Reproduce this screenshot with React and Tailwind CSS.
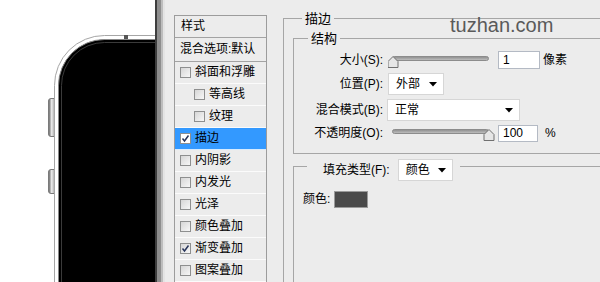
import React from 'react';

const effects = [
  { label: '斜面和浮雕' },
  { label: '等高线', indent: true },
  { label: '纹理', indent: true },
  { label: '描边', checked: true, active: true },
  { label: '内阴影' },
  { label: '内发光' },
  { label: '光泽' },
  { label: '颜色叠加' },
  { label: '渐变叠加', checked: true },
  { label: '图案叠加' },
];

const Phone = () => (
  <svg width="155" height="282" viewBox="0 0 155 282">
    <defs>
      <linearGradient id="btn" x1="0" x2="1" y1="0" y2="0">
        <stop offset="0" stopColor="#555" />
        <stop offset="0.35" stopColor="#ededed" />
        <stop offset="0.7" stopColor="#a0a0a0" />
        <stop offset="1" stopColor="#4c4c4c" />
      </linearGradient>
    </defs>
    <rect x="48.5" y="98.5" width="9" height="38" rx="2.5" fill="url(#btn)" stroke="#7a7a7a" />
    <rect x="48.5" y="169.5" width="9" height="24" rx="2.5" fill="url(#btn)" stroke="#7a7a7a" />
    <rect x="54.5" y="35.5" width="260" height="400" rx="50" fill="#fff" stroke="#a6a6a6" />
    <rect x="58.5" y="39.5" width="252" height="400" rx="46" fill="#000" stroke="#8a8a8a" />
    <rect x="61.5" y="42.5" width="246" height="400" rx="43" fill="none" stroke="#3a3a3a" />
    <rect x="124" y="35" width="4" height="4" fill="#555" />
  </svg>
);

const Check = ({ on, white }) => (
  <span
    className={`flex h-[11px] w-[11px] shrink-0 items-center justify-center border border-[#8e8f8f] ${
      white ? 'bg-white' : 'bg-[linear-gradient(135deg,#d6d6d6,#f7f7f7)]'
    }`}
  >
    {on && (
      <svg width="9" height="9" viewBox="0 0 9 9">
        <path d="M1.5 4.5 L3.5 7 L7.5 1.5" fill="none" stroke="#27345a" strokeWidth="1.5" />
      </svg>
    )}
  </span>
);

const Arrow = () => (
  <svg width="8" height="5" viewBox="0 0 8 5" className="shrink-0">
    <path d="M0 0 H8 L4 4.5 Z" fill="#000" />
  </svg>
);

const Dropdown = ({ label, className }) => (
  <div
    className={`flex h-[22px] items-center justify-between border border-[#d6d6d6] bg-white pl-[7px] pr-[6px] leading-[20px] ${className}`}
  >
    <span>{label}</span>
    <Arrow />
  </div>
);

const Slider = ({ at }) => (
  <svg width="110" height="22" viewBox="0 0 110 22" className="shrink-0">
    <defs>
      <linearGradient id="track" x1="0" x2="0" y1="0" y2="1">
        <stop offset="0" stopColor="#8a8a8a" />
        <stop offset="1" stopColor="#c4c4c4" />
      </linearGradient>
    </defs>
    <rect x="4.5" y="7.5" width="96" height="4" rx="2" fill="url(#track)" stroke="#8c8c8c" />
    <path
      d={`M${at - 5} 18.5 V12.5 L${at} 7.5 L${at + 5} 12.5 V18.5 Z`}
      fill="#e6e6e6"
      stroke="#707070"
    />
  </svg>
);

const Label = ({ children }) => (
  <span className="w-[89px] shrink-0 text-right leading-[22px]">{children}</span>
);

export default function App() {
  return (
    <div className="relative flex h-[282px] w-[600px] overflow-hidden bg-white font-['Liberation_Sans','Noto_Sans_CJK_SC',sans-serif] text-[12px] text-black">
      <div className="w-[155px] shrink-0">
        <Phone />
      </div>

      <div className="flex flex-1 bg-[#ececec]">
        {/* window edge */}
        <div className="w-[10px] shrink-0 bg-[linear-gradient(to_right,#3e3e3e_0px,#3e3e3e_2px,#8e8e8e_2px,#8e8e8e_6px,#bdbdbd_6px,#bdbdbd_8px,#e4e4e4_8px)]" />

        {/* styles list */}
        <div className="ml-[9px] mt-[15px] h-[300px] w-[93px] shrink-0 border border-[#9c9c9c]">
          <div className="h-[22px] border-b border-[#a3a3a3] pl-[6px] leading-[21px]">样式</div>
          <div className="h-[24px] border-b border-[#a3a3a3] pl-[5px] leading-[23px]">混合选项:默认</div>
          {effects.map((fx) => (
            <div
              key={fx.label}
              className={`flex h-[22px] items-center border-b border-white/80 ${
                fx.indent ? 'pl-[19px]' : 'pl-[5px]'
              } ${fx.active ? 'bg-[#3399ff]' : ''}`}
            >
              <Check on={fx.checked} white={fx.active} />
              <span className="ml-[4px] leading-[21px]">{fx.label}</span>
            </div>
          ))}
        </div>

        {/* stroke group */}
        <fieldset className="ml-[16px] mt-[10px] h-[300px] w-[330px] shrink-0 self-start border border-[#a6a6a6]">
          <legend className="ml-[18px] px-[3px] text-[13px] leading-[17px]">描边</legend>

          <fieldset className="ml-[9px] mt-[3px] w-[320px] border border-[#a6a6a6] pb-[9px] pt-[2px]">
            <legend className="ml-[14px] px-[3px] text-[13px] leading-[17px]">结构</legend>

            <div className="flex h-[22px] items-center">
              <Label>大小(S):</Label>
              <span className="ml-[5px]"><Slider at={5} /></span>
              <div className="h-[18px] w-[42px] border border-[#b4bac4] bg-white pl-[4px] leading-[16px]">1</div>
              <span className="ml-[3px]">像素</span>
            </div>

            <div className="mt-[2px] flex h-[22px] items-center">
              <Label>位置(P):</Label>
              <Dropdown label="外部" className="ml-[5px] w-[56px]" />
            </div>

            <div className="mt-[4px] flex h-[22px] items-center">
              <Label>混合模式(B):</Label>
              <Dropdown label="正常" className="ml-[4px] w-[133px]" />
            </div>

            <div className="mt-[1px] flex h-[22px] items-center">
              <Label>不透明度(O):</Label>
              <span className="ml-[5px]"><Slider at={101} /></span>
              <div className="h-[17px] w-[40px] border border-[#b4bac4] bg-white pl-[4px] leading-[15px]">100</div>
              <span className="ml-[7px]">%</span>
            </div>
          </fieldset>

          {/* fill group */}
          <fieldset className="ml-[9px] mt-[5px] h-[140px] w-[320px] border border-[#a6a6a6]">
            <legend className="ml-[13px] flex h-[14px] items-start pl-[16px] pr-[7px]">
              <span className="leading-[22px]">填充类型(F):</span>
              <Dropdown label="颜色" className="ml-[8px] w-[55px]" />
            </legend>
            <div className="mt-[18px] flex h-[17px] items-center pl-[9px]">
              <span className="leading-[17px]">颜色:</span>
              <span className="ml-[4px] h-[17px] w-[34px] border border-[#9a9a9a] bg-[#4a4a4a]" />
            </div>
          </fieldset>
        </fieldset>
      </div>

      <div className="absolute left-[450px] top-[12px] text-[20px] leading-[26px] text-[#5a5a5a]">
        tuzhan.com
      </div>
    </div>
  );
}
